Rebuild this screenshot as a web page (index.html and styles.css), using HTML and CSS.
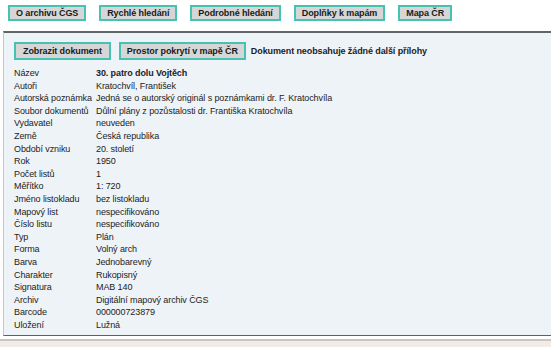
FILE: index.html
```html
<!DOCTYPE html>
<html>
	<head>
		<meta charset="UTF-8">
		<title>30. patro dolu Vojtěch</title>
		<link rel="stylesheet" href="styles.css">
	</head>
	<body>
		<div class="menu">
			<a class="btn">O archivu ČGS</a>
			<a class="btn">Rychlé hledání</a>
			<a class="btn">Podrobné hledání</a>
			<a class="btn">Doplňky k mapám</a>
			<a class="btn">Mapa ČR</a>
		</div>
		<div class="detail">
			<div class="tools">
				<a class="btn big">Zobrazit dokument</a>
				<a class="btn big">Prostor pokrytí v mapě ČR</a>
				<span class="note">Dokument neobsahuje žádné další přílohy</span>
			</div>
			<dl class="info">
				<dt>Název</dt><dd class="title">30. patro dolu Vojtěch</dd>
				<dt>Autoři</dt><dd>Kratochvíl, František</dd>
				<dt>Autorská poznámka</dt><dd>Jedná se o autorský originál s poznámkami dr. F. Kratochvíla</dd>
				<dt>Soubor dokumentů</dt><dd>Důlní plány z pozůstalosti dr. Františka Kratochvíla</dd>
				<dt>Vydavatel</dt><dd>neuveden</dd>
				<dt>Země</dt><dd>Česká republika</dd>
				<dt>Období vzniku</dt><dd>20. století</dd>
				<dt>Rok</dt><dd>1950</dd>
				<dt>Počet listů</dt><dd>1</dd>
				<dt>Měřítko</dt><dd>1: 720</dd>
				<dt>Jméno listokladu</dt><dd>bez listokladu</dd>
				<dt>Mapový list</dt><dd>nespecifikováno</dd>
				<dt>Číslo listu</dt><dd>nespecifikováno</dd>
				<dt>Typ</dt><dd>Plán</dd>
				<dt>Forma</dt><dd>Volný arch</dd>
				<dt>Barva</dt><dd>Jednobarevný</dd>
				<dt>Charakter</dt><dd>Rukopisný</dd>
				<dt>Signatura</dt><dd>MAB 140</dd>
				<dt>Archiv</dt><dd>Digitální mapový archiv ČGS</dd>
				<dt>Barcode</dt><dd>000000723879</dd>
				<dt>Uložení</dt><dd>Lužná</dd>
			</dl>
		</div>
		<div class="foot"></div>
	</body>
</html>
```

FILE: styles.css
```css
body{
	margin: 0;
	background: #fff;
	font-family: "Liberation Sans", Arial, sans-serif;
	font-size: 9px;
	letter-spacing: -0.1px;
	color: #1c1c24;
}
.menu{
	display: flex;
	gap: 13px;
	padding: 5px 8px 0;
	height: 16px;
}
.btn{
	display: inline-flex;
	align-items: center;
	height: 16px;
	box-sizing: border-box;
	padding: 0 6px;
	border: 2px solid #46c2b2;
	background: #d6d6d6;
	font-weight: bold;
	color: #1a1a1a;
	white-space: nowrap;
}
.detail{
	margin: 10px 0 0 3px;
	border-top: 2px solid #5e6666;
	border-left: 1px solid #c4c8cc;
	border-bottom: 1px solid #4d6a60;
	background: #eef3f7;
	padding: 9px 0 4px 10px;
}
.tools{
	display: flex;
	align-items: center;
	gap: 8px;
	height: 18px;
}
.btn.big{
	height: 18px;
	padding: 0 7px;
}
.btn.big + .btn.big{
	padding: 0 6px;
}
.note{
	margin-left: -3px;
	font-weight: bold;
}
.info{
	display: grid;
	grid-template-columns: 82px 1fr;
	margin: 7px 0 0;
	line-height: 12.6px;
}
.info dt, .info dd{
	margin: 0;
	white-space: nowrap;
}
.info .title{
	font-weight: bold;
}
.foot{
	margin-top: 3px;
	border-top: 2px solid #ccc4be;
	height: 6px;
	background: #f1ece8;
}
```
